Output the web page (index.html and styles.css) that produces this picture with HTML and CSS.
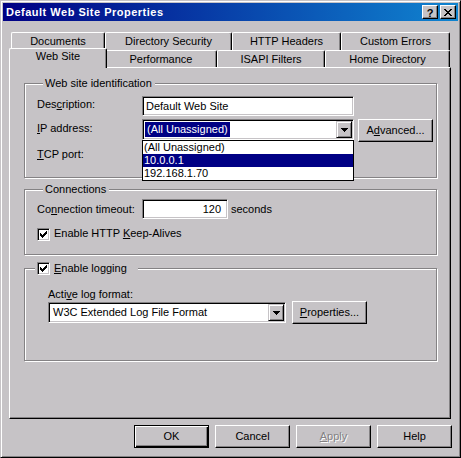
FILE: index.html
```html
<!DOCTYPE html>
<html lang="en">
<head>
<meta charset="utf-8">
<title>Default Web Site Properties</title>
<link rel="stylesheet" href="styles.css">
</head>
<body>
<div class="window">
  <div class="titlebar">
    <span class="title">Default Web Site Properties</span>
    <span class="cbtn cbtn-help">?</span>
    <span class="cbtn cbtn-close">
      <svg class="glyph-x" width="8" height="7" viewBox="0 0 8 7" shape-rendering="crispEdges"><path d="M0 0h2v1H0zM6 0h2v1H6zM1 1h2v1H1zM5 1h2v1H5zM2 2h4v1H2zM3 3h2v1H3zM2 4h4v1H2zM1 5h2v1H1zM5 5h2v1H5zM0 6h2v1H0zM6 6h2v1H6z" fill="#000"/></svg>
    </span>
  </div>

  <div class="client">
    <div class="tabs">
      <div class="tabrow tabrow-back">
        <div class="tab t-documents">Documents</div>
        <div class="tab t-dirsec">Directory Security</div>
        <div class="tab t-http">HTTP Headers</div>
        <div class="tab t-errors">Custom Errors</div>
      </div>
      <div class="tabrow tabrow-front">
        <div class="tab tab-selected t-website">Web Site</div>
        <div class="tab t-perf">Performance</div>
        <div class="tab t-isapi">ISAPI Filters</div>
        <div class="tab t-home">Home Directory</div>
      </div>
    </div>

    <div class="panel">
      <div class="group group-ident">
        <div class="legend">Web site identification</div>
        <div class="ident-grid">
          <div class="lbl lbl-desc">Des<u>c</u>ription:</div>
          <div class="field edit edit-desc">Default Web Site</div>
          <div class="cell-empty"></div>

          <div class="lbl lbl-ip"><u>I</u>P address:</div>
          <div class="combo-wrap">
            <div class="field combo">
              <span class="combo-text"><span class="sel-text">(All Unassigned)</span></span>
              <span class="drop-btn">
                <svg width="7" height="4" viewBox="0 0 7 4" shape-rendering="crispEdges"><path d="M0 0h7v1H0zM1 1h5v1H1zM2 2h3v1H2zM3 3h1v1H3z" fill="#000"/></svg>
              </span>
            </div>
            <div class="droplist">
              <div class="opt">(All Unassigned)</div>
              <div class="opt opt-hot">10.0.0.1</div>
              <div class="opt">192.168.1.70</div>
            </div>
          </div>
          <button type="button" class="btn btn-adv">A<u>d</u>vanced...</button>

          <div class="lbl lbl-tcp"><u>T</u>CP port:</div>
          <div class="field edit edit-tcp"></div>
          <div class="cell-empty"></div>
        </div>
      </div>

      <div class="group group-conn">
        <div class="legend">Connections</div>
        <div class="conn-row">
          <div class="lbl lbl-timeout">Co<u>n</u>nection timeout:</div>
          <div class="field edit edit-timeout">120</div>
          <div class="lbl lbl-seconds">seconds</div>
        </div>
        <div class="check-row">
          <span class="check">
            <svg width="7" height="7" viewBox="0 0 7 7" shape-rendering="crispEdges"><path d="M0 2h1v3H0zM1 3h1v3H1zM2 4h1v3H2zM3 3h1v3H3zM4 2h1v3H4zM5 1h1v3H5zM6 0h1v3H6z" fill="#000"/></svg>
          </span>
          <span class="check-label">Enable HTTP <u>K</u>eep-Alives</span>
        </div>
      </div>

      <div class="group group-log">
        <div class="legend legend-check">
          <span class="check">
            <svg width="7" height="7" viewBox="0 0 7 7" shape-rendering="crispEdges"><path d="M0 2h1v3H0zM1 3h1v3H1zM2 4h1v3H2zM3 3h1v3H3zM4 2h1v3H4zM5 1h1v3H5zM6 0h1v3H6z" fill="#000"/></svg>
          </span>
          <span class="check-label"><u>E</u>nable logging</span>
        </div>
        <div class="lbl lbl-format">Acti<u>v</u>e log format:</div>
        <div class="log-row">
          <div class="field combo combo-log">
            <span class="combo-text"><span class="plain-text">W3C Extended Log File Format</span></span>
            <span class="drop-btn">
              <svg width="7" height="4" viewBox="0 0 7 4" shape-rendering="crispEdges"><path d="M0 0h7v1H0zM1 1h5v1H1zM2 2h3v1H2zM3 3h1v1H3z" fill="#000"/></svg>
            </span>
          </div>
          <button type="button" class="btn btn-props"><u>P</u>roperties...</button>
        </div>
      </div>
    </div>

    <div class="button-row">
      <button type="button" class="btn btn-default">OK</button>
      <button type="button" class="btn">Cancel</button>
      <button type="button" class="btn btn-disabled"><u>A</u>pply</button>
      <button type="button" class="btn">Help</button>
    </div>
  </div>
</div>
</body>
</html>
```

FILE: styles.css
```css
* {
  box-sizing: border-box;
}

html,
body {
  margin: 0;
  padding: 0;
}

body {
  width: 461px;
  height: 458px;
  overflow: hidden;
  background: #c6c3c6;
  color: #000;
  font-family: "Liberation Sans", Arial, sans-serif;
  font-size: 11px;
  line-height: 13px;
}

u {
  text-decoration: underline;
  text-underline-offset: 1px;
}

/* ---------- window frame ---------- */
.window {
  width: 461px;
  height: 458px;
  display: flex;
  flex-direction: column;
  padding: 2px;
  background: #c6c3c6;
  border: 1px solid;
  border-color: #c6c3c6 #000 #000 #c6c3c6;
  box-shadow: inset 1px 1px #fff, inset -1px -1px #848284;
}

.titlebar {
  height: 18px;
  flex: none;
  display: flex;
  align-items: center;
  padding: 0 2px 0 3px;
  background: linear-gradient(to right, #000084, #1084d0);
}

.title {
  flex: 1;
  color: #fff;
  font-weight: bold;
  letter-spacing: 0.5px;
  white-space: nowrap;
}

.cbtn {
  width: 16px;
  height: 14px;
  display: flex;
  align-items: center;
  justify-content: center;
  background: #c6c3c6;
  border: 1px solid;
  border-color: #fff #000 #000 #fff;
  box-shadow: inset -1px -1px #848284;
}

.cbtn-help {
  margin-right: 2px;
  font-weight: bold;
  font-size: 11px;
  line-height: 12px;
  padding-top: 1px;
}

.glyph-x {
  display: block;
}

/* ---------- client ---------- */
.client {
  flex: 1;
  display: flex;
  flex-direction: column;
  padding: 0 7px 0 6px;
}

.tabs {
  padding-top: 11px;
}

.tabrow {
  display: flex;
  margin-left: 2px;
  height: 18px;
}

.tabrow-front {
  height: 17px;
}

.tab {
  flex: none;
  height: 100%;
  padding-top: 2px;
  text-align: center;
  white-space: nowrap;
  background: #c6c3c6;
  border-left: 1px solid #fff;
  border-top: 1px solid #fff;
  border-right: 1px solid #000;
  border-radius: 2px 2px 0 0;
  box-shadow: inset -1px 0 #848284;
}

.t-documents { width: 94px; }
.t-dirsec { width: 127px; }
.t-http { width: 109px; }
.t-errors { width: 109px; }
.t-website { width: 98px; }
.t-perf { width: 112px; }
.t-isapi { width: 108px; }
.t-home { width: 125px; }

.tab-selected {
  position: relative;
  z-index: 2;
  height: 20px;
  margin: -2px -2px 0 -2px;
  padding-top: 1px;
}

.panel {
  height: 352px;
  flex: none;
  display: flex;
  flex-direction: column;
  padding: 15px 13px 0 14px;
  background: #c6c3c6;
  border: 1px solid;
  border-color: #fff #000 #000 #fff;
  box-shadow: inset -1px -1px #848284;
}

/* ---------- group boxes ---------- */
.group {
  border: 1px solid #848284;
  box-shadow: inset 1px 1px #fff, 1px 1px #fff;
}

.legend {
  width: max-content;
  margin: -7px 0 0 6px;
  padding: 0 3px 0 2px;
  background: #c6c3c6;
  white-space: nowrap;
}

.group-ident {
  padding: 0 0 13px 12px;
}

.group-conn {
  margin-top: 11px;
  padding: 0 0 13px 12px;
}

.group-log {
  margin-top: 13px;
  padding: 0 0 36px 23px;
}

.group-log .legend-check {
  display: flex;
  align-items: center;
  margin-left: -13px;
  padding: 0 11px 0 2px;
  height: 13px;
}

/* ---------- fields ---------- */
.field {
  background: #fff;
  border: 1px solid;
  border-color: #848284 #fff #fff #848284;
  box-shadow: inset 1px 1px #000, inset -1px -1px #c6c3c6;
}

.edit {
  height: 20px;
  display: flex;
  align-items: center;
  padding: 0 3px;
  white-space: nowrap;
}

.combo {
  height: 21px;
  display: flex;
  align-items: stretch;
  padding: 1px;
}

.combo-text {
  flex: 1;
  display: flex;
  align-items: center;
  padding-left: 1px;
  white-space: nowrap;
}

.sel-text {
  background: #000084;
  color: #fff;
  padding: 1px 2px;
}

.plain-text {
  padding: 1px 2px;
}

.drop-btn {
  width: 16px;
  flex: none;
  display: flex;
  align-items: center;
  justify-content: center;
  background: #c6c3c6;
  border: 1px solid;
  border-color: #c6c3c6 #000 #000 #c6c3c6;
  box-shadow: inset 1px 1px #fff, inset -1px -1px #848284;
}

.drop-btn svg {
  display: block;
  margin-top: 1px;
}

.combo-wrap {
  position: relative;
  height: 21px;
}

.droplist {
  position: absolute;
  z-index: 5;
  top: 100%;
  left: 0;
  right: 0;
  background: #fff;
  border: 1px solid #000;
}

.opt {
  height: 13px;
  padding-left: 1px;
  white-space: nowrap;
}

.opt-hot {
  background: #000084;
  color: #fff;
}

/* ---------- identification grid ---------- */
.ident-grid {
  display: grid;
  grid-template-columns: 105px 212px 79px;
  grid-template-rows: 20px 22px 20px;
  row-gap: 3px;
  margin-top: 6px;
}

.lbl {
  white-space: nowrap;
}

.lbl-desc { padding-top: 2px; }
.lbl-ip { padding-top: 3px; }
.lbl-tcp { padding-top: 4px; }

.edit-tcp {
  width: 48px;
}

/* ---------- connections ---------- */
.conn-row {
  display: flex;
  align-items: center;
  margin-top: 3px;
}

.lbl-timeout {
  width: 105px;
}

.edit-timeout {
  width: 86px;
  justify-content: flex-end;
  padding: 0 6px 0 3px;
}

.lbl-seconds {
  margin-left: 3px;
}

.check-row {
  display: flex;
  align-items: flex-start;
  margin-top: 9px;
  height: 13px;
}

.check {
  width: 13px;
  height: 13px;
  flex: none;
  display: flex;
  align-items: center;
  justify-content: center;
  background: #fff;
  border: 1px solid;
  border-color: #848284 #fff #fff #848284;
  box-shadow: inset 1px 1px #000, inset -1px -1px #c6c3c6;
}

.check svg {
  display: block;
}

.check-label {
  margin-left: 4px;
  white-space: nowrap;
}

.check-row .check-label {
  margin-top: -1px;
}

/* ---------- logging ---------- */
.lbl-format {
  margin-top: 13px;
}

.log-row {
  display: flex;
  align-items: center;
  height: 23px;
}

.combo-log {
  width: 238px;
}

/* ---------- buttons ---------- */
.btn {
  margin: 0;
  padding: 0;
  font: inherit;
  line-height: 13px;
  color: #000;
  width: 75px;
  height: 23px;
  flex: none;
  background: #c6c3c6;
  border: 1px solid;
  border-color: #fff #000 #000 #fff;
  box-shadow: inset -1px -1px #848284;
  text-align: center;
  white-space: nowrap;
  cursor: default;
}

.btn-adv {
  margin-left: 4px;
}

.btn-props {
  margin-left: 6px;
}

.btn-default {
  border-color: #000;
  box-shadow: inset 1px 1px #fff, inset -1px -1px #000, inset -2px -2px #848284;
}

.btn-disabled {
  color: #848284;
  text-shadow: 1px 1px #fff;
}

.button-row {
  display: flex;
  justify-content: flex-end;
  gap: 6px;
  margin: 6px -1px 0 0;
}
```
